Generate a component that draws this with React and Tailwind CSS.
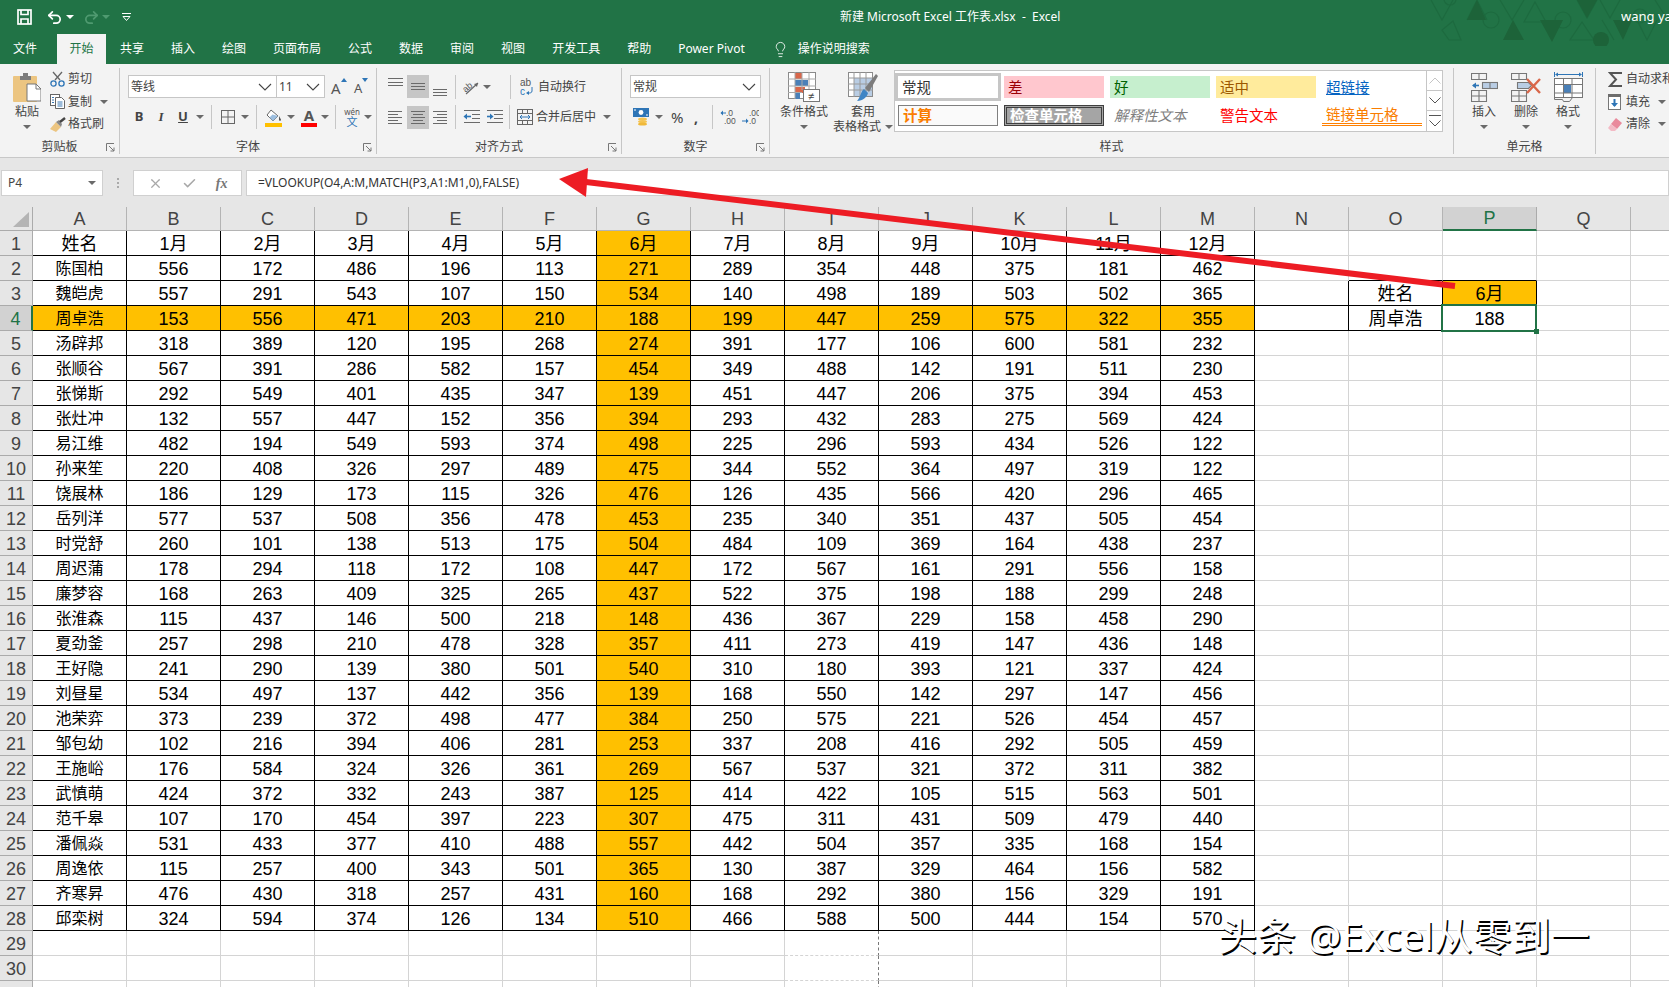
import React from 'react';
import { Undo2, Redo2, Lightbulb, X, Check } from 'lucide-react';

const RAW = `陈国柏 556 172 486 196 113 271 289 354 448 375 181 462
魏皑虎 557 291 543 107 150 534 140 498 189 503 502 365
周卓浩 153 556 471 203 210 188 199 447 259 575 322 355
汤辟邦 318 389 120 195 268 274 391 177 106 600 581 232
张顺谷 567 391 286 582 157 454 349 488 142 191 511 230
张悌斯 292 549 401 435 347 139 451 447 206 375 394 453
张灶冲 132 557 447 152 356 394 293 432 283 275 569 424
易江维 482 194 549 593 374 498 225 296 593 434 526 122
孙来笙 220 408 326 297 489 475 344 552 364 497 319 122
饶展林 186 129 173 115 326 476 126 435 566 420 296 465
岳列洋 577 537 508 356 478 453 235 340 351 437 505 454
时党舒 260 101 138 513 175 504 484 109 369 164 438 237
周迟蒲 178 294 118 172 108 447 172 567 161 291 556 158
廉梦容 168 263 409 325 265 437 522 375 198 188 299 248
张淮森 115 437 146 500 218 148 436 367 229 158 458 290
夏劲釜 257 298 210 478 328 357 411 273 419 147 436 148
王好隐 241 290 139 380 501 540 310 180 393 121 337 424
刘昼星 534 497 137 442 356 139 168 550 142 297 147 456
池荣弈 373 239 372 498 477 384 250 575 221 526 454 457
邹包幼 102 216 394 406 281 253 337 208 416 292 505 459
王施峪 176 584 324 326 361 269 567 537 321 372 311 382
武慎萌 424 372 332 243 387 125 414 422 105 515 563 501
范千皋 107 170 454 397 223 307 475 311 431 509 479 440
潘佩焱 531 433 377 410 488 557 442 504 357 335 168 154
周逸依 115 257 400 343 501 365 130 387 329 464 156 582
齐寒昇 476 430 318 257 431 160 168 292 380 156 329 191
邱栾树 324 594 374 126 134 510 466 588 500 444 154 570`;

const HEAD = ['姓名', '1月', '2月', '3月', '4月', '5月', '6月', '7月', '8月', '9月', '10月', '11月', '12月'];
const ROWS = [HEAD, ...RAW.split('\n').map((l) => l.split(' '))];
const COLS = 'ABCDEFGHIJKLMNOPQR'.split('');
const TABS = ['共享', '插入', '绘图', '页面布局', '公式', '数据', '审阅', '视图', '开发工具', '帮助', 'Power Pivot'];

const Caret = ({ className = '' }) => (
  <svg width="8" height="4" viewBox="0 0 8 4" className={`shrink-0 ${className}`}><path d="M0 0h8L4 4z" fill="#6a6a6a" /></svg>
);

const Chevron = () => (
  <svg width="14" height="8" viewBox="0 0 14 8" fill="none" stroke="#444" strokeWidth="1.1"><path d="M1 1l6 6 6-6" /></svg>
);

const Launcher = () => (
  <svg width="9" height="9" viewBox="0 0 9 9" fill="none" stroke="#777" strokeWidth="1" className="justify-self-end mr-[4px]">
    <path d="M.5 8V.5H8M3 3l5 5M8 4.5V8H4.5" />
  </svg>
);

const Sep = ({ className = '' }) => <div className={`w-px h-[24px] bg-[#c6c6c6] shrink-0 ${className}`} />;

const Group = ({ width, label, launcher, children }) => (
  <div className={`${width} shrink-0 h-[86px] mt-[4px] flex flex-col border-r border-[#c6c6c6]`}>
    <div className="h-[72px] flex">{children}</div>
    <div className="h-[14px] grid grid-cols-[1fr_auto_1fr] items-center text-[12px] leading-none text-[#444]">
      <span />
      <span>{label}</span>
      {launcher ? <Launcher /> : <span />}
    </div>
  </div>
);

const BigBtn = ({ icon, width, children, wide }) => (
  <div className={`${width} shrink-0 flex flex-col items-center pt-[4px] text-[12px] leading-[14px] text-[#444]`}>
    <div className="h-[30px] flex items-center justify-center">{icon}</div>
    <div className="mt-[3px]">{children}</div>
    {wide ? (
      <div className="flex items-center gap-[4px] mt-[1px]">{wide}<Caret /></div>
    ) : (
      <Caret className="mt-[6px]" />
    )}
  </div>
);

const SmallRow = ({ icon, children, caret }) => (
  <div className="h-[22.5px] flex items-center text-[12px] text-[#444]">
    <div className="w-[18px] flex justify-start">{icon}</div>
    <span>{children}</span>
    {caret && <Caret className="ml-[8px]" />}
  </div>
);

const Clipboard = () => (
  <svg width="28" height="30" viewBox="0 0 28 30">
    <rect x="0" y="4" width="24" height="26" rx="1" fill="#ecc581" />
    <path d="M7 4h3V1h5v3h3v4H7z" fill="#7c7c7c" />
    <path d="M14 12h9l5 5v12H14z" fill="#fff" stroke="#777" />
    <path d="M23 12v5h5" fill="none" stroke="#777" />
  </svg>
);

const Scissors = () => (
  <svg width="15" height="16" viewBox="0 0 15 16" fill="none">
    <path d="M5 9L12 1M10 9L3 1" stroke="#666" strokeWidth="1.3" />
    <circle cx="3.5" cy="12.5" r="2.6" stroke="#2e75b6" strokeWidth="1.3" />
    <circle cx="11.5" cy="12.5" r="2.6" stroke="#2e75b6" strokeWidth="1.3" />
  </svg>
);

const Copy = () => (
  <svg width="15" height="15" viewBox="0 0 15 15" fill="#fff" stroke="#666">
    <rect x=".5" y=".5" width="9" height="11" />
    <path d="M5.5 3.5h6l3 3v8h-9z" />
    <path d="M2 3.5h2M2 6h2M2 8.5h2M7.5 8h5M7.5 10h5M7.5 12h5" stroke="#3b78b4" />
  </svg>
);

const Brush = () => (
  <svg width="17" height="15" viewBox="0 0 17 15">
    <path d="M0 12l6-7 5 5-5 5z" fill="#ecc581" />
    <path d="M6 5l3-2 3 4-1 3z" fill="#888" />
    <path d="M10 5l5-4" stroke="#444" strokeWidth="2.4" />
  </svg>
);

const Borders = () => (
  <svg width="14" height="14" viewBox="0 0 14 14" fill="none" stroke="#666"><rect x=".5" y=".5" width="13" height="13" /><path d="M7 0v14M0 7h14" /></svg>
);

const Bucket = () => (
  <svg width="17" height="19" viewBox="0 0 17 19">
    <path d="M6 2l7 6-5 5-6-6z" fill="#fff" stroke="#666" />
    <path d="M7.5 6.5L13 8 8 13 4.5 9.5z" fill="#9dbfe0" />
    <path d="M14 8c1 2 2 3 2 4s-2 1-2 0z" fill="#555" />
    <rect y="15" width="17" height="4" fill="#ffc000" />
  </svg>
);

const AlignIcon = ({ lines }) => (
  <svg width="22" height="23" viewBox="0 0 22 23" stroke="#6a6a6a" strokeWidth="1">
    {lines.map(([y, a, b]) => <path key={y} d={`M${a} ${y + 0.5}H${b}`} />)}
  </svg>
);

const Orientation = () => (
  <svg width="17" height="17" viewBox="0 0 17 17">
    <text x="0" y="12" fontSize="9" fill="#555" fontFamily="Liberation Sans" transform="rotate(-40 5 10)">ab</text>
    <path d="M3 16L15 5" stroke="#666" strokeWidth="1.2" />
    <path d="M15 5l-1 4-3-3z" fill="#666" />
  </svg>
);

const Indent = ({ flip }) => (
  <svg width="17" height="15" viewBox="0 0 17 15" stroke="#6a6a6a">
    <path d={flip ? 'M1 .5h16M8 4.5h9M8 8.5h9M1 12.5h16' : 'M1 .5h16M9 4.5h8M9 8.5h8M1 12.5h16'} />
    <path d={flip ? 'M1 6.5h4' : 'M3 6.5h5'} stroke="#2e75b6" strokeWidth="1.6" />
    <path d={flip ? 'M4 3.5l3.5 3-3.5 3z' : 'M4 3.5L.5 6.5l3.5 3z'} fill="#2e75b6" stroke="none" />
  </svg>
);

const WrapIcon = () => (
  <svg width="15" height="18" viewBox="0 0 15 18" fill="none">
    <text x="0" y="8" fontSize="10" fill="#555" fontFamily="Liberation Sans">ab</text>
    <text x="0" y="17" fontSize="10" fill="#2e75b6" fontFamily="Liberation Sans">c</text>
    <path d="M12 9v4c0 2-2 2-4 2" stroke="#2e75b6" />
    <path d="M9 13v4l-3-2z" fill="#2e75b6" />
  </svg>
);

const MergeIcon = () => (
  <svg width="16" height="16" viewBox="0 0 16 16" fill="none" stroke="#666">
    <rect x=".5" y=".5" width="15" height="15" />
    <path d="M0 4.5h16M0 11.5h16M5.5 0v4M10.5 0v4M5.5 12v4M10.5 12v4" />
    <path d="M3 8h10M5 6L3 8l2 2M11 6l2 2-2 2" stroke="#2e75b6" />
  </svg>
);

const Money = () => (
  <svg width="17" height="18" viewBox="0 0 17 18">
    <rect width="16" height="9" fill="#2e75b6" />
    <circle cx="8" cy="4.5" r="2.4" fill="#fff" />
    <path d="M1 2h2M13 7h2" stroke="#fff" />
    <ellipse cx="9.5" cy="11" rx="4.5" ry="1.6" fill="#f5c451" />
    <ellipse cx="9.5" cy="13.5" rx="4.5" ry="1.6" fill="#f5c451" />
    <ellipse cx="9.5" cy="16" rx="4.5" ry="1.6" fill="#f0b93a" />
  </svg>
);

const Decimal = ({ more }) => (
  <svg width="17" height="16" viewBox="0 0 17 16" fontFamily="Liberation Sans" fontSize="8.5" fill="#555">
    <text x={more ? '6' : '7'} y="7">{more ? '.0' : '.00'}</text>
    <text x={more ? '4' : '7'} y="15">{more ? '.00' : '.0'}</text>
    {more ? (
      <g stroke="#2e75b6" fill="#2e75b6"><path d="M1 4h5" /><path d="M3 1.5L.5 4 3 6.5z" stroke="none" /></g>
    ) : (
      <g stroke="#2e75b6" fill="#2e75b6"><path d="M0 12h5" /><path d="M4 9.5L6.5 12 4 14.5z" stroke="none" /></g>
    )}
  </svg>
);

const CondFormat = () => (
  <svg width="32" height="30" viewBox="0 0 32 30">
    <g fill="#fff" stroke="#8a8a8a"><rect x=".5" y=".5" width="27" height="26" /></g>
    <rect x="7" y="1" width="7" height="6" fill="#d9674a" />
    <rect x="7" y="8" width="13" height="6" fill="#4a80b8" />
    <rect x="7" y="15" width="10" height="6" fill="#d9674a" />
    <rect x="7" y="21" width="5" height="6" fill="#4a80b8" />
    <path d="M7 0v27M14 0v18M21 0v18M0 7h28M0 14h28M0 20.5h14" stroke="#a8a8a8" fill="none" />
    <rect x="15.5" y="17.5" width="16" height="12" fill="#fff" stroke="#777" />
    <text x="20" y="27.5" fontSize="11" fill="#444" fontFamily="Liberation Sans">≠</text>
  </svg>
);

const TableFormat = () => (
  <svg width="30" height="30" viewBox="0 0 30 30">
    <rect x=".5" y=".5" width="24" height="24" fill="#fff" stroke="#8a8a8a" />
    <rect x="6" y="6" width="18" height="18" fill="#b9cde4" />
    <path d="M6 0v25M12 0v25M18 0v25M0 6h25M0 12h25M0 18h25" stroke="#9a9a9a" fill="none" />
    <path d="M30 4l-2-2-11 14 4 4z" fill="#7c7c7c" />
    <path d="M16 17l4 4c-1 4-5 8-11 8 3-3 4-10 7-12z" fill="#3f85c5" />
  </svg>
);

const InsertCells = () => (
  <svg width="27" height="29" viewBox="0 0 27 29" fill="none" stroke="#777" strokeWidth="1.1">
    <path d="M.5.5h15v6H.5zM8 .5v6M.5 17.5h15v11H.5zM.5 23h15M8 17.5v11" />
    <rect x="11.5" y="9.5" width="15" height="6" fill="#b9cde4" />
    <path d="M19 9.5v6" />
    <path d="M2 12.5h6" stroke="#2e75b6" strokeWidth="1.6" />
    <path d="M5 9.5L1 12.5l4 3z" fill="#2e75b6" stroke="none" />
  </svg>
);

const DeleteCells = () => (
  <svg width="31" height="29" viewBox="0 0 31 29" fill="none" stroke="#777" strokeWidth="1.1">
    <path d="M.5.5h15v6H.5zM8 .5v6M.5 17.5h15v11H.5zM.5 23h15M8 17.5v11" />
    <path d="M6.5 9.5h11l3 3-3 3h-11z" fill="#b9cde4" />
    <path d="M16 6l13 14M29 6L16 20" stroke="#d9674a" strokeWidth="2.4" />
  </svg>
);

const FormatCells = () => (
  <svg width="29" height="30" viewBox="0 0 29 30" fill="none" stroke="#777">
    <path d="M.5 0v5M28.5 0v5M3 2.5h23" stroke="#2e75b6" />
    <path d="M1 2.5l3-2v4zM28 2.5l-3-2v4z" fill="#2e75b6" stroke="none" />
    <rect x=".5" y="6.5" width="28" height="19" fill="#fff" />
    <rect x="9" y="12" width="8" height="9" fill="#4a80b8" stroke="none" />
    <path d="M9.5 6.5v19M18 6.5v19M.5 12.5h28M.5 21h28" />
    <path d="M.5 25.5v2h8l1 2h6l3-4" />
  </svg>
);

const Sigma = () => (
  <svg width="15" height="17" viewBox="0 0 15 17" fill="none" stroke="#555" strokeWidth="2"><path d="M14 2H2l6 6.500-6 6.500h12" /></svg>
);

const FillIcon = () => (
  <svg width="13" height="16" viewBox="0 0 13 16">
    <rect x=".5" y=".5" width="12" height="15" fill="#fff" stroke="#777" />
    <rect width="13" height="3" fill="#6d6d6d" />
    <path d="M6.500 5v7" stroke="#2e75b6" strokeWidth="2" />
    <path d="M3 9l3.500 4L10 9z" fill="#2e75b6" />
  </svg>
);

const Eraser = () => (
  <svg width="14" height="13" viewBox="0 0 14 13">
    <path d="M8 0l6 5-5 6-6-5z" fill="#e98a9c" />
    <path d="M3 6l6 5-2 2H3L0 10z" fill="#f3bac5" />
  </svg>
);

const FloppySave = () => (
  <svg width="15" height="16" viewBox="0 0 15 16" fill="none" stroke="#fff" strokeWidth="1.700">
    <rect x="1" y="1" width="13" height="14" />
    <path d="M4 1v4.500h7V1M4 15v-5h7v5" />
  </svg>
);

const Combo = ({ width, children }) => (
  <div className={`${width} h-[23px] bg-white border border-[#c6c6c6] flex items-center justify-between pl-[2px] pr-[4px] text-[12px] text-[#444]`}>
    <span>{children}</span>
    <Chevron />
  </div>
);

const ribbonTop = 'h-[23px] mt-[7px] flex items-center';
const ribbonBottom = 'h-[24px] mt-[7px] flex items-center text-[#444]';

const Ribbon = () => (
  <div className="h-[94px] bg-[#f3f3f3] border-b border-[#c8c8c8] flex">
    <Group width="w-[120px]" label="剪贴板" launcher>
      <div className="w-[50px] flex flex-col items-center pt-[4px] pl-[4px] text-[12px] leading-[14px] text-[#444]">
        <Clipboard />
        <div className="mt-[3px]">粘贴</div>
        <Caret className="mt-[6px]" />
      </div>
      <div className="flex flex-col">
        <SmallRow icon={<Scissors />}>剪切</SmallRow>
        <SmallRow icon={<Copy />} caret>复制</SmallRow>
        <SmallRow icon={<Brush />}>格式刷</SmallRow>
      </div>
    </Group>

    <Group width="w-[257px]" label="字体" launcher>
      <div className="pl-[8px] flex flex-col">
        <div className={ribbonTop}>
          <Combo width="w-[149px]">等线</Combo>
          <div className="-ml-px"><Combo width="w-[49px]">11</Combo></div>
          <div className="ml-[6px] flex items-start w-[23px] text-[15px] leading-none text-[#555]">
            <span className="mt-[3px]">A</span>
            <svg width="6" height="4" viewBox="0 0 6 4"><path d="M3 0l3 4H0z" fill="#2e75b6" /></svg>
          </div>
          <div className="flex items-start w-[20px] text-[13px] leading-none text-[#555]">
            <span className="mt-[4px]">A</span>
            <svg width="6" height="4" viewBox="0 0 6 4"><path d="M0 0h6L3 4z" fill="#2e75b6" /></svg>
          </div>
        </div>
        <div className={ribbonBottom}>
          <span className="w-[22px] text-center text-[13px] font-bold">B</span>
          <span className="w-[22px] text-center text-[13px] italic font-['Liberation_Serif',serif] font-bold">I</span>
          <span className="w-[22px] text-center text-[13px] font-bold underline">U</span>
          <Caret className="ml-[2px]" />
          <Sep className="ml-[7px]" />
          <div className="ml-[9px]"><Borders /></div>
          <Caret className="ml-[6px]" />
          <Sep className="ml-[7px]" />
          <div className="ml-[8px]"><Bucket /></div>
          <Caret className="ml-[5px]" />
          <div className="ml-[6px] w-[16px] flex flex-col items-center">
            <span className="text-[15px] leading-[15px] font-bold text-[#555]">A</span>
            <span className="w-[16px] h-[4px] bg-[#ff0000]" />
          </div>
          <Caret className="ml-[4px]" />
          <Sep className="ml-[6px]" />
          <div className="ml-[7px] w-[18px] flex flex-col items-center leading-none">
            <span className="text-[8px] text-[#555]">wén</span>
            <span className="text-[11px] text-[#2e75b6]">文</span>
          </div>
          <Caret className="ml-[3px]" />
        </div>
      </div>
    </Group>

    <Group width="w-[245px]" label="对齐方式" launcher>
      <div className="pl-[8px] flex flex-col">
        <div className={ribbonTop}>
          <AlignIcon lines={[[3, 3, 18], [7, 3, 18], [10, 3, 18]]} />
          <div className="bg-[#c6c6c6]"><AlignIcon lines={[[8, 4, 18], [11, 4, 18], [14, 4, 18]]} /></div>
          <AlignIcon lines={[[14, 4, 18], [17, 4, 18], [20, 4, 18]]} />
          <Sep className="ml-[4px]" />
          <div className="ml-[7px]"><Orientation /></div>
          <Caret className="ml-[3px]" />
          <Sep className="ml-[19px]" />
          <div className="ml-[9px]"><WrapIcon /></div>
          <span className="ml-[3px] text-[12px] text-[#444]">自动换行</span>
        </div>
        <div className={ribbonBottom}>
          <AlignIcon lines={[[5, 3, 17], [8, 3, 13], [11, 3, 17], [14, 3, 13], [17, 3, 17]]} />
          <div className="bg-[#c6c6c6]"><AlignIcon lines={[[5, 4, 18], [8, 6, 16], [11, 4, 18], [14, 6, 16], [17, 4, 18]]} /></div>
          <AlignIcon lines={[[5, 4, 18], [8, 8, 18], [11, 4, 18], [14, 8, 18], [17, 4, 18]]} />
          <Sep className="ml-[4px]" />
          <div className="ml-[7px]"><Indent /></div>
          <div className="ml-[6px]"><Indent flip /></div>
          <Sep className="ml-[6px]" />
          <div className="ml-[7px]"><MergeIcon /></div>
          <span className="ml-[3px] text-[12px]">合并后居中</span>
          <Caret className="ml-[7px]" />
        </div>
      </div>
    </Group>

    <Group width="w-[148px]" label="数字" launcher>
      <div className="pl-[8px] flex flex-col">
        <div className={ribbonTop}><Combo width="w-[131px]">常规</Combo></div>
        <div className={ribbonBottom}>
          <div className="ml-[3px]"><Money /></div>
          <Caret className="ml-[5px]" />
          <span className="ml-[8px] w-[14px] text-[15px]">%</span>
          <span className="ml-[9px] w-[6px] text-[14px] font-bold">,</span>
          <Sep className="ml-[12px]" />
          <div className="ml-[7px]"><Decimal more /></div>
          <div className="ml-[5px]"><Decimal /></div>
        </div>
      </div>
    </Group>

    <Group width="w-[684px]" label="样式">
      <div className="pl-[6px] flex">
        <BigBtn width="w-[56px]" icon={<CondFormat />}>条件格式</BigBtn>
        <BigBtn width="w-[62px]" icon={<TableFormat />} wide="表格格式">套用</BigBtn>
        <div className="mt-[2px] w-[549px] h-[62px] bg-white border border-[#c6c6c6] flex">
          <div className="w-[531px] pl-[3px] pt-[5px] grid grid-cols-[repeat(5,100px)] grid-rows-[22px_21px] gap-x-[6px] gap-y-[7px] text-[14.5px] leading-none font-['Noto_Sans_CJK_SC',sans-serif]">
            <div className="flex items-center pl-[4px] text-[#333] outline-[3px] outline-[#c6c6c6]">常规</div>
            <div className="flex items-center pl-[4px] bg-[#ffc7ce] text-[#9c0006]">差</div>
            <div className="flex items-center pl-[4px] bg-[#c6efce] text-[#006100]">好</div>
            <div className="flex items-center pl-[4px] bg-[#ffeb9c] text-[#9c5700]">适中</div>
            <div className="flex items-center pl-[4px] text-[#0563c1] underline">超链接</div>
            <div className="flex items-center pl-[4px] border border-[#7f7f7f] bg-[#fafafa] text-[#fa7d00] font-bold">计算</div>
            <div className="flex items-center pl-[3px] border-[3px] border-double border-[#3f3f3f] bg-[#a5a5a5] text-white font-bold">检查单元格</div>
            <div className="flex items-center pl-[4px] italic text-[#7f7f7f]">解释性文本</div>
            <div className="flex items-center pl-[4px] text-[#ff0000]">警告文本</div>
            <div className="flex items-center pl-[4px] border-b-[3px] border-double border-[#ff8001] text-[#fa7d00]">链接单元格</div>
          </div>
          <div className="w-[16px] h-full flex flex-col border-l border-[#c6c6c6]">
            <div className="h-[20px] flex items-center justify-center border-b border-[#c6c6c6]">
              <svg width="12" height="7" viewBox="0 0 12 7" fill="none" stroke="#c4c4c4"><path d="M.5 6.500L6 1l5.500 5.500" /></svg>
            </div>
            <div className="h-[20px] flex items-center justify-center border-b border-[#c6c6c6]">
              <svg width="12" height="7" viewBox="0 0 12 7" fill="none" stroke="#555"><path d="M.5.5L6 6l5.500-5.500" /></svg>
            </div>
            <div className="flex-1 flex flex-col items-center justify-center gap-[4px]">
              <div className="w-[12px] h-px bg-[#555]" />
              <svg width="12" height="7" viewBox="0 0 12 7" fill="none" stroke="#555"><path d="M.5.5L6 6l5.500-5.500" /></svg>
            </div>
          </div>
        </div>
      </div>
    </Group>

    <Group width="w-[142px]" label="单元格">
      <div className="pl-[9px] flex">
        <BigBtn width="w-[42px]" icon={<InsertCells />}>插入</BigBtn>
        <BigBtn width="w-[42px]" icon={<DeleteCells />}>删除</BigBtn>
        <BigBtn width="w-[42px]" icon={<FormatCells />}>格式</BigBtn>
      </div>
    </Group>

    <div className="flex-1 min-w-0 mt-[4px] pl-[12px] overflow-hidden">
      <div className="flex flex-col w-[80px]">
        <SmallRow icon={<Sigma />}><span className="whitespace-nowrap">自动求和</span></SmallRow>
        <SmallRow icon={<FillIcon />} caret>填充</SmallRow>
        <SmallRow icon={<Eraser />} caret>清除</SmallRow>
      </div>
    </div>
  </div>
);

const TitlePattern = () => (
  <svg width="249" height="46" viewBox="1420 0 249 46" className="absolute top-0 right-0" fill="none" stroke="#1d6a3f" strokeWidth="1.2">
    <path d="M1431 0l11 20 11-20M1467 20l10-20 10 20M1453 21l8 19h-12l-7-10zM1500 0l12 20 12-20M1524 22l11-20 11 20zM1577 0l10 18 10-18M1600 0l10 18 10-18M1637 20l10 20 10-20M1655 0l14 22" />
    <circle cx="1491" cy="20" r="8" />
    <circle cx="1563" cy="20" r="8" />
    <circle cx="1450" cy="-1" r="6" />
    <circle cx="1640" cy="16" r="7" />
    <path d="M1582 22l-12 18h24zM1614 40l-12-20" />
    <g fill="#1d6339" stroke="none">
      <path d="M1467 20l10-20 9 20z" />
      <path d="M1503 40l10-20 11 20z" />
      <path d="M1540 20h23l-11 22z" />
      <path d="M1577 0h20l-10 18z" />
      <path d="M1613 20h19l-9 20z" />
      <circle cx="1601" cy="40" r="8" />
    </g>
  </svg>
);

const TitleBar = () => (
  <div className="relative bg-[#217346] text-white text-[12px]">
    <TitlePattern />
    <div className="relative h-[34px] flex items-center">
      <div className="w-[840px] shrink-0 flex items-center pl-[17px]">
        <FloppySave />
        <Undo2 size={17} strokeWidth={2.4} className="ml-[14px]" />
        <Caret className="ml-[3px] [&_path]:fill-white" />
        <Redo2 size={17} strokeWidth={2.4} className="ml-[9px] text-[#4f9a70]" />
        <Caret className="ml-[2px] [&_path]:fill-[#4f9a70]" />
        <svg width="9" height="8" viewBox="0 0 9 8" fill="none" stroke="#fff" className="ml-[12px]"><path d="M0 .5h9M1 3.500h7L4.500 7.500z" /></svg>
      </div>
      <span className="whitespace-pre">新建 Microsoft Excel 工作表.xlsx  -  Excel</span>
      <span className="ml-auto w-[48px] overflow-hidden whitespace-nowrap text-[13px]">wang ya</span>
    </div>
    <div className="relative h-[30px] flex items-stretch pl-[0px] whitespace-nowrap">
      <div className="w-[57px] flex items-center justify-center pr-[7px]">文件</div>
      <div className="w-[49px] flex items-center justify-center bg-[#f3f3f3] text-[#217346]">开始</div>
      <div className="flex items-center pl-[14px] gap-[27px]">
        {TABS.map((t) => <span key={t}>{t}</span>)}
      </div>
      <div className="flex items-center ml-[27px] gap-[9px]">
        <Lightbulb size={17} strokeWidth={1.2} />
        <span>操作说明搜索</span>
      </div>
    </div>
  </div>
);

const FormulaBar = () => (
  <div className="h-[49px] bg-[#e6e6e6] pt-[12px] pb-[11px]">
    <div className="h-[26px] flex text-[12px] text-[#444]">
      <div className="ml-[1px] w-[102px] bg-white border border-[#d0d0d0] flex items-center justify-between pl-[6px] pr-[6px]">
        <span>P4</span>
        <Caret />
      </div>
      <div className="w-[30px] flex flex-col items-center justify-center gap-[2px]">
        <i className="w-[2px] h-[2px] bg-[#aaa]" /><i className="w-[2px] h-[2px] bg-[#aaa]" /><i className="w-[2px] h-[2px] bg-[#aaa]" />
      </div>
      <div className="w-[109px] bg-white border border-[#d0d0d0] flex items-center justify-around px-[4px] text-[#a8a8a8]">
        <X size={15} strokeWidth={2} />
        <Check size={15} strokeWidth={2.4} />
        <span className="font-['Liberation_Serif',serif] italic font-bold text-[14px] text-[#777]">fx</span>
      </div>
      <div className="ml-[4px] flex-1 bg-white border border-[#d0d0d0] flex items-center pl-[11px] font-['Noto_Sans',sans-serif] text-[#333]">
        =VLOOKUP(O4,A:M,MATCH(P3,A1:M1,0),FALSE)
      </div>
    </div>
  </div>
);

// border colour of one sheet cell, black inside the two boxed tables
const cellBorder = (r, c) => {
  if (r <= 28 && c <= 12) return 'border-r border-b border-black';
  if ((r === 3 || r === 4) && c >= 13 && c <= 15) return 'border-r border-b border-black';
  if (r === 2 && (c === 14 || c === 15)) return 'border-r border-b border-r-[#d4d4d4] border-b-black';
  return 'border-r border-b border-[#d4d4d4]';
};

const cellFill = (r, c) => {
  if (r <= 28 && c <= 12 && (r === 4 || c === 6)) return 'bg-[#ffc000]';
  if (r === 3 && c === 15) return 'bg-[#ffc000]';
  return 'bg-white';
};

const cellText = (r, c) => {
  if (r <= 28 && c <= 12) return ROWS[r - 1][c];
  if (r === 3 && c === 14) return '姓名';
  if (r === 3 && c === 15) return '6月';
  if (r === 4 && c === 14) return '周卓浩';
  if (r === 4 && c === 15) return '188';
  return '';
};

const cellSize = (r, c) => {
  if (c === 0 && r > 1 && r <= 28) return 'text-[16px]';
  return 'text-[18px]';
};

const Sheet = () => {
  const rows = Array.from({ length: 31 }, (_, i) => i + 1);
  return (
    <div className="grid grid-cols-[33px_repeat(18,94px)] grid-rows-[24px_repeat(31,25px)] font-['Liberation_Sans','Noto_Sans_CJK_SC',sans-serif] leading-none text-black">
      <div className="bg-[#e6e6e6] border-r border-b border-[#ababab] flex items-end justify-end pb-[3px] pr-[3px]">
        <svg width="16" height="15" viewBox="0 0 16 15"><path d="M16 0v15H0z" fill="#b4b4b4" /></svg>
      </div>
      {COLS.map((c) => (
        <div
          key={c}
          className={c === 'P'
            ? 'bg-[#d2d2d2] text-[#217346] border-r border-[#ababab] border-b-2 border-b-[#217346] flex items-center justify-center text-[18px]'
            : 'bg-[#e6e6e6] text-[#444] border-r border-b border-[#b4b4b4] flex items-center justify-center text-[18px]'}
        >
          {c}
        </div>
      ))}
      {rows.map((r) => (
        <React.Fragment key={r}>
          <div className={r === 4
            ? 'bg-[#d2d2d2] text-[#217346] border-r-2 border-r-[#217346] border-b border-b-[#ababab] flex items-center justify-center text-[18px] pt-[2px]'
            : 'bg-[#e6e6e6] text-[#444] border-r border-b border-[#ababab] flex items-center justify-center text-[18px] pt-[2px]'}
          >
            {r <= 30 ? r : ''}
          </div>
          {COLS.map((_, c) => (
            <div
              key={c}
              className={`relative flex items-center justify-center pt-[2px] ${cellBorder(r, c)} ${cellFill(r, c)} ${cellSize(r, c)} ${r > 28 && c === 8 ? 'border-r-[#777] border-dashed border-b-solid' : ''}`}
            >
              {cellText(r, c)}
              {r === 4 && c === 15 && (
                <div className="absolute left-[-2px] top-[-2px] right-[-1px] bottom-[-2px] border-2 border-[#217346] z-10">
                  <div className="absolute right-[-4px] bottom-[-4px] w-[5px] h-[5px] bg-[#217346]" />
                </div>
              )}
            </div>
          ))}
        </React.Fragment>
      ))}
    </div>
  );
};

export default function App() {
  return (
    <div className="relative w-[1669px] h-[987px] overflow-hidden bg-white font-['Noto_Sans','Noto_Sans_CJK_SC',sans-serif]">
      <TitleBar />
      <Ribbon />
      <FormulaBar />
      <Sheet />
      <svg width="1669" height="987" className="absolute inset-0 z-20 pointer-events-none">
        <path d="M586 182L1455 286" stroke="#ed1c24" strokeWidth="6" />
        <path d="M559 179L588 168L586 197z" fill="#ed1c24" />
      </svg>
      <div className="absolute z-20 left-[1218px] top-[911px] whitespace-nowrap text-[39px] leading-[48px] text-white [text-shadow:1.500px_1.500px_0_#000]">
        头条 @Excel从零到一
      </div>
    </div>
  );
}
